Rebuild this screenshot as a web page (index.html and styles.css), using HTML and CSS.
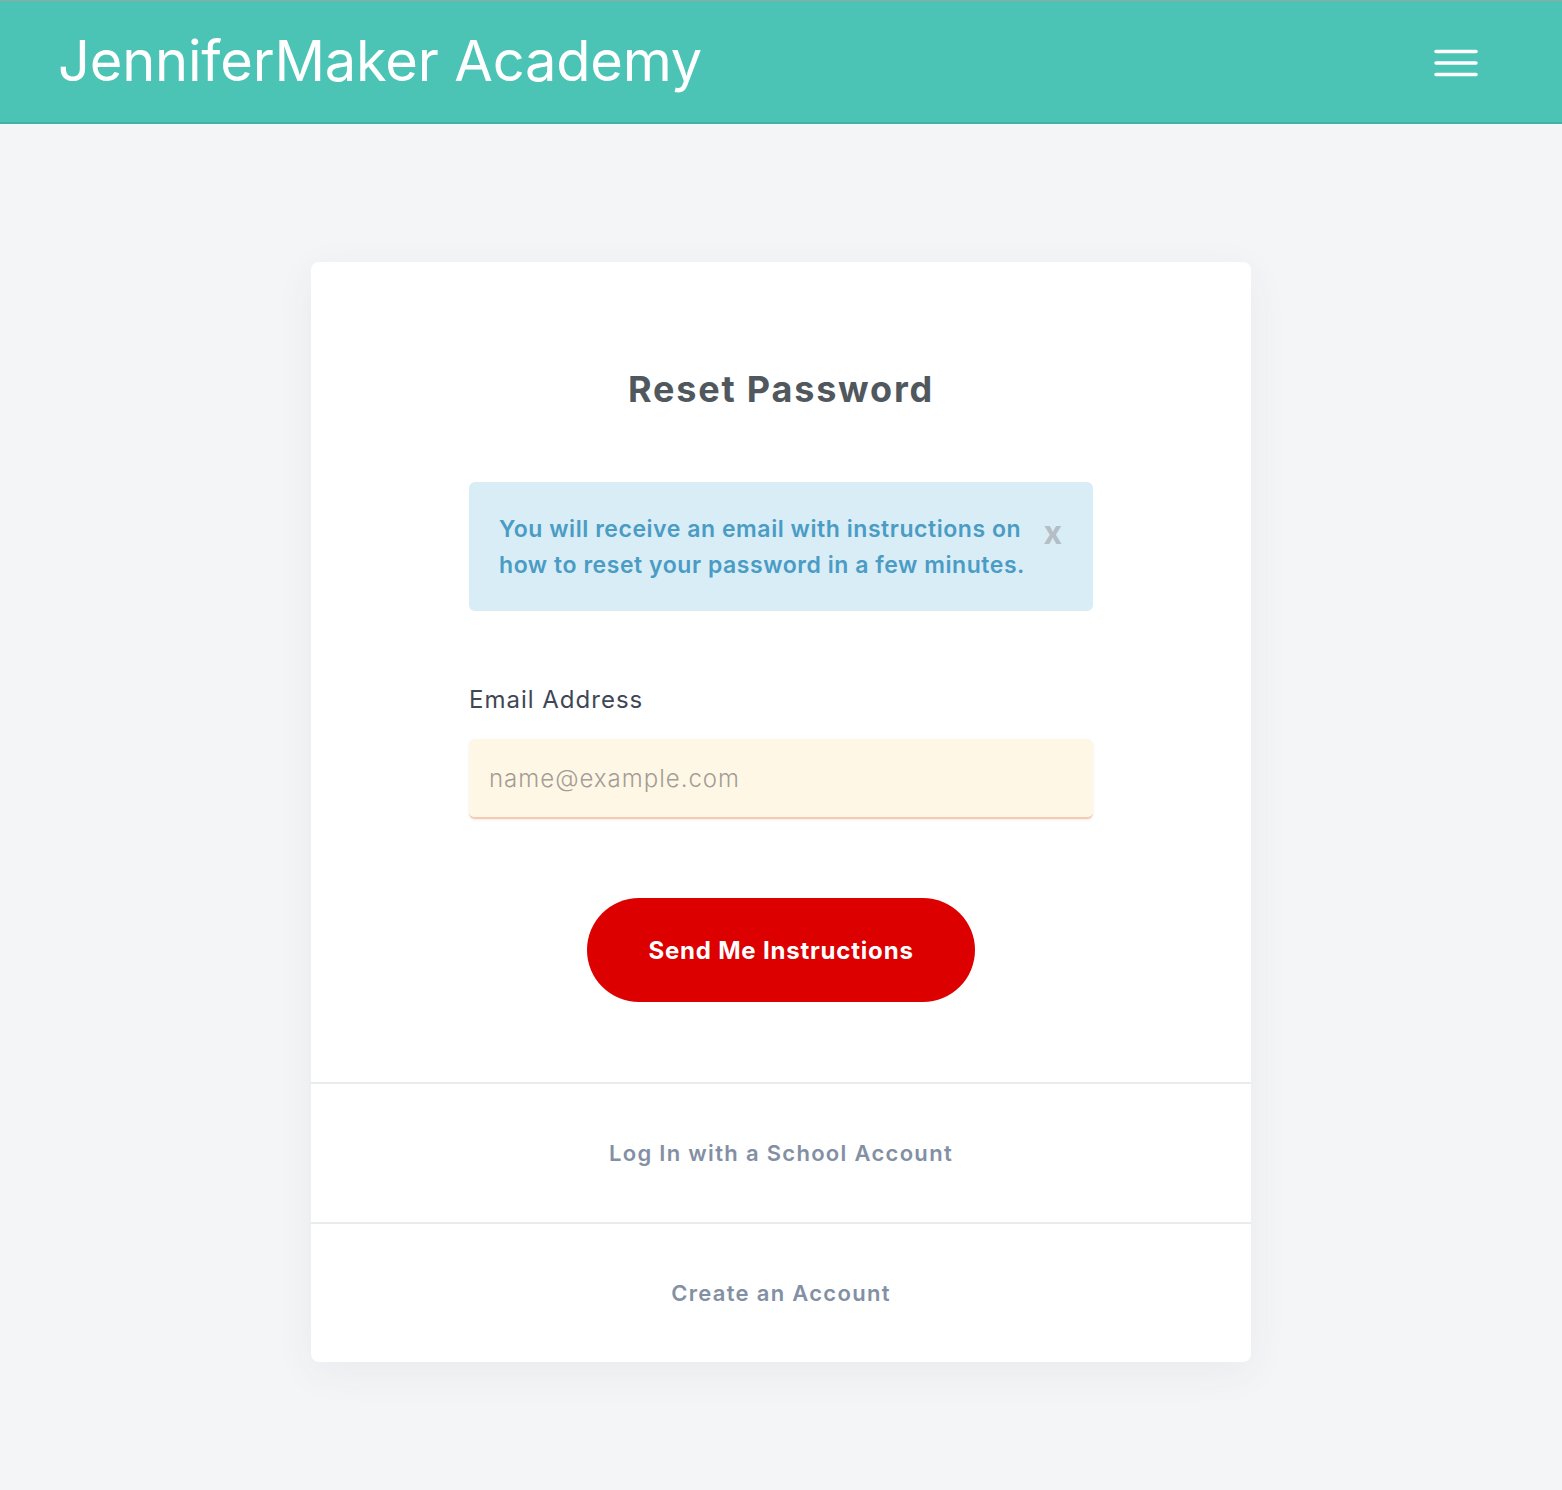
FILE: index.html
```html
<!DOCTYPE html>
<html lang="en">
    <head>
        <meta charset="utf-8">
        <title>JenniferMaker Academy: Reset Password</title>
        <link rel="stylesheet" href="styles.css">
    </head>
    <body>
        <header class="top-bar">
            <a href="#" class="brand">JenniferMaker Academy</a>
            <button class="menu-toggle" aria-label="Menu">
                <svg width="44" height="28" viewBox="0 0 44 28">
                    <line x1="2" y1="2.5" x2="42" y2="2.5" stroke="#fff" stroke-width="3.5" stroke-linecap="round"/>
                    <line x1="2" y1="14" x2="42" y2="14" stroke="#fff" stroke-width="3.5" stroke-linecap="round"/>
                    <line x1="2" y1="25.5" x2="42" y2="25.5" stroke="#fff" stroke-width="3.5" stroke-linecap="round"/>
                </svg>
            </button>
        </header>

        <main class="page">
            <div class="card">
                <div class="card-body">
                    <h1 class="card-title">Reset Password</h1>

                    <div class="alert">
                        <p>You will receive an email with instructions on how to reset your password in a few minutes.</p>
                        <span class="alert-close">x</span>
                    </div>

                    <label class="field-label" for="email">Email Address</label>
                    <input class="field-input" id="email" type="email" placeholder="name@example.com">

                    <div class="actions">
                        <button class="btn-primary">Send Me Instructions</button>
                    </div>
                </div>
                <a href="#" class="card-link">Log In with a School Account</a>
                <a href="#" class="card-link">Create an Account</a>
            </div>
        </main>
    </body>
</html>
```

FILE: styles.css
```css
body {
    margin: 0;
    background-color: #f4f5f7;
    font-family: Inter, "Open Sans", Arial, sans-serif;
    color: #4a4f55;
}

.top-bar {
    height: 121px;
    background-color: #4bc4b6;
    border-top: 1px solid #9aa6a4;
    border-bottom: 2px solid #41b3a6;
    display: flex;
    align-items: center;
    justify-content: space-between;
    padding: 0 82px 0 58px;
}

.brand {
    color: #ffffff;
    text-decoration: none;
    font-size: 56px;
    font-weight: 400;
    letter-spacing: -0.2px;
    margin-top: -2px;
}

.menu-toggle {
    background: none;
    border: 0;
    padding: 0;
    display: flex;
    margin-top: 2px;
    margin-right: 2px;
}

.page {
    display: flex;
    justify-content: center;
    padding: 138px 0 128px;
}

.card {
    width: 940px;
    background-color: #ffffff;
    border-radius: 8px;
    box-shadow: 0 10px 40px rgba(40, 60, 80, 0.06);
    display: flex;
    flex-direction: column;
}

.card-body {
    padding: 104px 158px 80px;
    display: flex;
    flex-direction: column;
}

.card-title {
    margin: 0 0 70px;
    text-align: center;
    font-size: 36px;
    font-weight: 700;
    letter-spacing: 1.8px;
    color: #50585e;
    line-height: 46px;
}

.alert {
    background-color: #d9edf6;
    border-radius: 6px;
    padding: 29px 31px 28px 30px;
    display: flex;
    align-items: flex-start;
    gap: 14px;
}

.alert p {
    margin: 0;
    flex: 1;
    color: #4a9cc5;
    font-size: 23px;
    font-weight: 600;
    line-height: 36px;
    letter-spacing: 0.55px;
}

.alert-close {
    color: #b4bec5;
    font-size: 32px;
    font-weight: 700;
    line-height: 36px;
    margin-top: 4px;
}

.field-label {
    margin-top: 74px;
    font-size: 24px;
    letter-spacing: 1px;
    color: #3f4756;
    line-height: 30px;
}

.field-input {
    margin-top: 24px;
    height: 80px;
    box-sizing: border-box;
    border: 0;
    border-bottom: 2px solid #f7c9ae;
    border-radius: 6px;
    background-color: #fff7e6;
    box-shadow: 0 1px 3px rgba(0, 0, 0, 0.08);
    padding: 0 20px;
    font-family: inherit;
    font-size: 24px;
    letter-spacing: 1px;
    color: #4a4f55;
}

.field-input::placeholder {
    color: #a39d95;
    font-weight: 300;
}

.actions {
    margin-top: 79px;
    display: flex;
    justify-content: center;
}

.btn-primary {
    width: 388px;
    height: 104px;
    border: 0;
    border-radius: 52px;
    background-color: #dc0000;
    color: #ffffff;
    font-family: inherit;
    font-size: 24px;
    font-weight: 700;
    letter-spacing: 0.8px;
}

.card-link {
    display: flex;
    align-items: center;
    justify-content: center;
    height: 140px;
    box-sizing: border-box;
    border-top: 2px solid #e8ecef;
    color: #8390a4;
    text-decoration: none;
    font-size: 22px;
    font-weight: 600;
    letter-spacing: 1.3px;
}
```
